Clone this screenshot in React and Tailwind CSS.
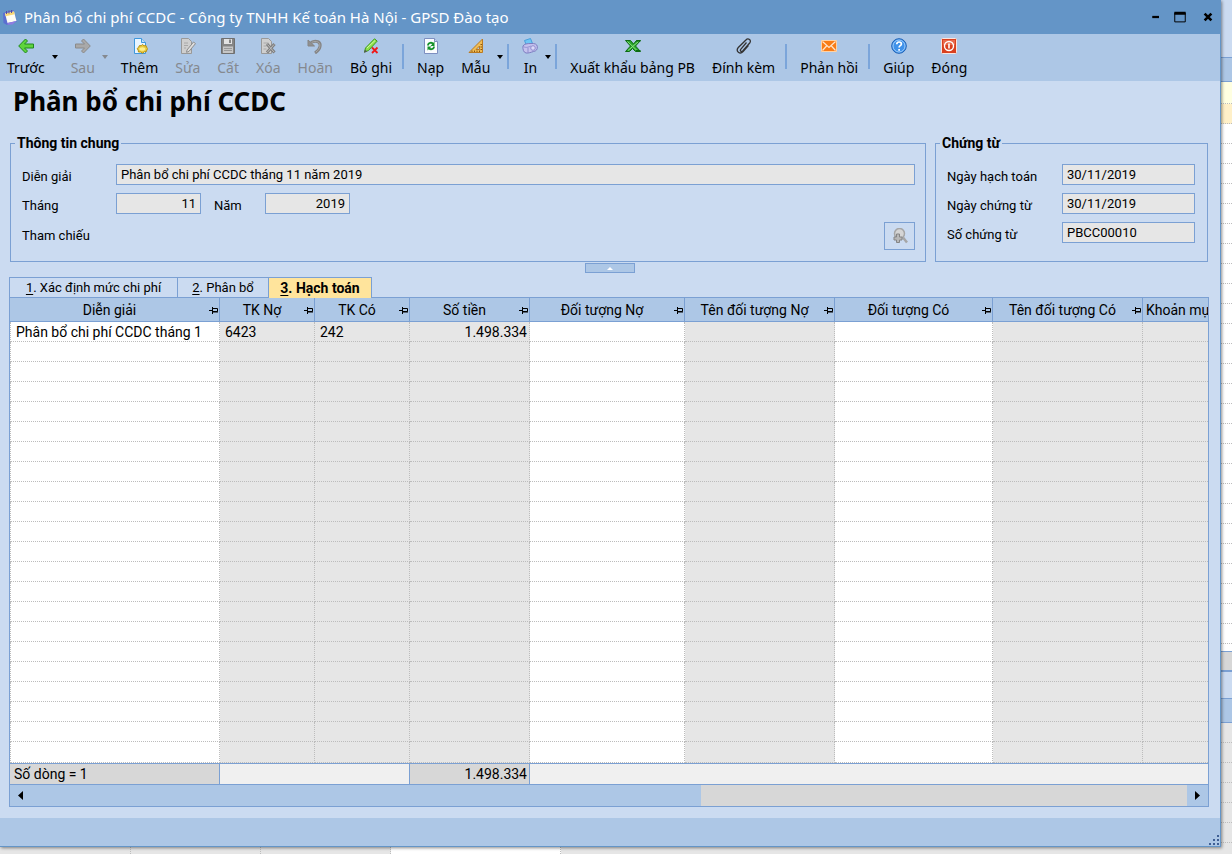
import { useState } from 'react'

const COLUMNS = [
  { title: 'Diễn giải', width: 'w-[210px]', locked: false },
  { title: 'TK Nợ', width: 'w-[95px]', locked: true },
  { title: 'TK Có', width: 'w-[95px]', locked: true },
  { title: 'Số tiền', width: 'w-[120px]', locked: true, right: true },
  { title: 'Đối tượng Nợ', width: 'w-[155px]', locked: false },
  { title: 'Tên đối tượng Nợ', width: 'w-[150px]', locked: true },
  { title: 'Đối tượng Có', width: 'w-[158px]', locked: false },
  { title: 'Tên đối tượng Có', width: 'w-[150px]', locked: true },
  { title: 'Khoản mụ', width: '', locked: true, last: true },
]

const ENTRY = ['Phân bổ chi phí CCDC tháng 1', '6423', '242', '1.498.334', '', '', '', '', '']
const ROWS = [ENTRY, ...Array.from({ length: 21 }, () => COLUMNS.map(() => ''))]

const TABS = [
  { key: '1', label: 'Xác định mức chi phí', width: 'w-[169px]' },
  { key: '2', label: 'Phân bổ', width: 'w-[91px]' },
  { key: '3', label: 'Hạch toán', width: 'w-[103px]' },
]

function Svg({ children, className = 'size-4' }) {
  return (
    <svg viewBox="0 0 16 16" className={className} fill="none" aria-hidden="true">
      {children}
    </svg>
  )
}

const ICONS = {
  back: (
    <path d="M7.500 1 .7 8l6.800 7 2-2L6.500 10h9V6h-9l3-3z" fill="#5fd43c" stroke="#1f8a1c" strokeLinejoin="round" />
  ),
  forward: (
    <path d="m8.500 1 6.800 7-6.800 7-2-2 3-3h-9V6h9l-3-3z" fill="#a9a9a9" stroke="#8a8a8a" strokeLinejoin="round" />
  ),
  add: (
    <>
      <path d="M2.500.5h7l4 4v11h-11z" fill="#e9f5ff" stroke="#3f97dc" />
      <path d="M9.500.500v4h4" fill="#bfe0fa" stroke="#3f97dc" />
      <path d="m10.500 6.500 1.500 1.300 2-.2.5 1.600 1.300 1.300-1 1.500-.5 1.700-2 .1-1.800 1.400-2-1.200-2 0-.3-1.800-1-1.700 1.500-1.300.7-1.600 1.800.1z" fill="#e9c93c" stroke="#b58f12" />
      <ellipse cx="10.300" cy="11" rx="3" ry="1.800" fill="#fff08a" />
    </>
  ),
  edit: (
    <>
      <path d="M1.500.5h7l3 3v12h-10z" fill="#cfcfcf" stroke="#999" />
      <path d="M4 5h4M4 7.500h4M4 10h2" stroke="#a8a8a8" />
      <path d="m7 12 6.500-8 2 1.600L9 13.400l-2.500.9z" fill="#dedede" stroke="#8c8c8c" />
    </>
  ),
  save: (
    <>
      <path d="M1.500.5h13v15h-13z" fill="#858585" stroke="#707070" />
      <path d="M4 1h8v5H4z" fill="#e2e2e2" />
      <path d="M9 1.500h2v3.500H9z" fill="#858585" />
      <path d="M3 8.500h10V15H3z" fill="#c6c6c6" />
      <path d="M4 10.500h8M4 12.500h8" stroke="#999" />
    </>
  ),
  remove: (
    <>
      <path d="M1.500.5h7l3 3v12h-10z" fill="#cfcfcf" stroke="#999" />
      <path d="M3.500 5h5M3.500 8h3M3.500 11h3" stroke="#a8a8a8" />
      <path d="m7 6 7.500 8.500M14.500 6 7 14.500" stroke="#7f7f7f" strokeWidth="3" />
      <path d="m7.500 6.500 6.500 7.500M14 6.500 7.500 14" stroke="#bdbdbd" />
    </>
  ),
  undo: (
    <>
      <path d="M4 4.500c5-3 10-.5 9 4-.4 2.500-2 4.500-5 6.500" stroke="#858585" strokeWidth="3" />
      <path d="M4.500 4.500c5-2.500 9-.3 8.300 3.800-.4 2.300-1.800 4.200-4 5.800" stroke="#a6a6a6" />
      <path d="M1 2v6h6.500z" fill="#909090" stroke="#858585" />
    </>
  ),
  unpost: (
    <>
      <path d="M2.500 10 11.500.8l2.700 2.300L5.500 12.500l-4 1.500z" fill="#8ee04a" stroke="#3f9c1d" />
      <path d="m4 10 8-7.500" stroke="#d2f7a6" />
      <path d="M1 15 2 11.500l2 2z" fill="#555" />
      <path d="m9 9.500 5.500 5.500M14.500 9.500 9 15" stroke="#f01818" strokeWidth="1.800" />
    </>
  ),
  reload: (
    <>
      <path d="M1.500.5h10l3 3v12h-13z" fill="#fafcff" stroke="#7d8fc0" />
      <path d="M11.500.5v3h3" fill="#c9d3ee" stroke="#7d8fc0" />
      <path d="M5 7.500C5 4.500 9 4 10.300 6M11 8.500c0 3-4 3.500-5.300 1.500" stroke="#15922a" strokeWidth="1.800" />
      <path d="M11.500 3.500V8H7.500zM4.500 12.500V8.500h4z" fill="#15922a" />
    </>
  ),
  ruler: (
    <>
      <path d="M14.500 1v13.500H1z" fill="#f0bd55" stroke="#bb7a20" />
      <path d="M11.500 8v3.500H8z" fill="#adc7e6" stroke="#bb7a20" />
      <path d="M4 14v-1.500M6.500 14v-1.500M9 14v-1.500M11.500 14v-1.500M14 11.500h-1.500M14 9h-1.500M14 6.500h-1.500" stroke="#8a5412" />
    </>
  ),
  print: (
    <>
      <path d="m2.500 2.500 6-2 2 5-6 2z" fill="#6fc7f5" stroke="#4a9fdc" />
      <path d="M1 8c1-2 4-2.500 8-2.500 4-.3 6 .8 6.300 3 .3 3-1 4.500-3.800 5-2.500.8-5 1.800-7.500 1.500C1.500 14.500.5 11 1 8z" fill="#c5c2ee" stroke="#7d7cc0" />
      <path d="M1.500 8.500C4 10.500 8 8.500 9 8M6 10v5" stroke="#8f8dce" />
      <circle cx="11" cy="10" r="2.300" fill="#dcdaf8" stroke="#8f8dce" />
    </>
  ),
  excel: (
    <>
      <path d="M.5 2.500h5l3 3.500 3-3.500h4L10.500 8l5 5.500h-5l-3-3-3 3h-4l5-5.500z" fill="#28a32c" stroke="#0d6b12" />
      <path d="m2.500 3.500 9.500 9M13.500 3.500 3 12.500" stroke="#8be27f" />
      <path d="M11 12.500h4.500M11 3h4.500" stroke="#0d6b12" />
    </>
  ),
  clip: (
    <path
      d="m10.500 4.500-5.800 6.800c-1.100 1.400.8 3 2 1.700l7-8c2.200-2.700-1.500-5.500-3.800-3L2.300 9.500c-3 3.700 1.600 7.400 4.800 4l5.500-6.300"
      stroke="#333"
      strokeWidth="1.300"
    />
  ),
  mail: (
    <>
      <path d="M.5 2.500h15v11H.5z" fill="#f97c16" stroke="#ffd2a4" />
      <path d="m1.500 3.500 6.500 6 6.500-6M1.500 12.500l4.500-5M14.500 12.500 10 7.500" stroke="#ffe6cb" strokeWidth="1.200" />
    </>
  ),
  help: (
    <>
      <circle cx="8" cy="8" r="7.300" fill="#3f92ea" stroke="#1c60b5" />
      <circle cx="8" cy="8" r="6" stroke="#9fcdfb" />
      <path d="M5.800 6.200c0-3 4.600-2.800 4.600-.2 0 1.700-2.300 1.600-2.300 3.500M8.100 11v1.800" stroke="#fff" strokeWidth="1.700" />
    </>
  ),
  power: (
    <>
      <rect x=".5" y=".5" width="15" height="15" rx="1" fill="#d9401f" stroke="#fbe3dc" />
      <path d="M2 2h12v5H2z" fill="#e9694b" />
      <circle cx="8" cy="8" r="4.500" stroke="#fff" strokeWidth="1.400" />
      <path d="M8 5.500v5" stroke="#fff" strokeWidth="1.600" />
    </>
  ),
}

const TOOLBAR = [
  [
    { label: 'Trước', icon: 'back', menu: true },
    { label: 'Sau', icon: 'forward', menu: true, disabled: true },
    { label: 'Thêm', icon: 'add' },
    { label: 'Sửa', icon: 'edit', disabled: true },
    { label: 'Cất', icon: 'save', disabled: true },
    { label: 'Xóa', icon: 'remove', disabled: true },
    { label: 'Hoãn', icon: 'undo', disabled: true },
    { label: 'Bỏ ghi', icon: 'unpost' },
  ],
  [
    { label: 'Nạp', icon: 'reload' },
    { label: 'Mẫu', icon: 'ruler', menu: true },
  ],
  [{ label: 'In', icon: 'print', menu: true }],
  [
    { label: 'Xuất khẩu bảng PB', icon: 'excel' },
    { label: 'Đính kèm', icon: 'clip' },
  ],
  [{ label: 'Phản hồi', icon: 'mail' }],
  [
    { label: 'Giúp', icon: 'help' },
    { label: 'Đóng', icon: 'power' },
  ],
]

function TitleBar() {
  return (
    <header className="flex h-[34px] items-center bg-[#6495c7] pr-[6px] pl-[2px] text-white">
      <Svg>
        <path d="m1 4 10.500-3 3.500 11.500L5 16l-3.500-2z" fill="#5b6fd0" />
        <path d="m3 4.500 9-2 2.500 9.500L5.500 14z" fill="#fdfdf4" />
        <path d="m3 4.500 9-2 .7 2.700-9 2z" fill="#f7d774" />
        <path d="M4.500 5V2M7 4.500v-3M9.500 4V1" stroke="#5a4a9c" />
        <path d="m5.500 14 9-2-4 3.500-5 .2z" fill="#8f7be0" />
      </Svg>
      <span className="ml-[6px] font-[Noto_Sans,sans-serif] text-[15px] leading-5">
        Phân bổ chi phí CCDC - Công ty TNHH Kế toán Hà Nội - GPSD Đào tạo
      </span>
      <div className="ml-auto flex items-center gap-3 text-black">
        <button aria-label="Thu nhỏ">
          <Svg className="size-3">
            <path d="M3 8h9" stroke="currentColor" strokeWidth="3" />
          </Svg>
        </button>
        <button aria-label="Phóng to">
          <Svg className="size-3">
            <path d="M1 2.500h14v12H1z" stroke="currentColor" strokeWidth="1.300" />
            <path d="M.5 3h15" stroke="currentColor" strokeWidth="4" />
          </Svg>
        </button>
        <button aria-label="Đóng cửa sổ" className="ml-1">
          <Svg className="size-3">
            <path d="m3.500 3.500 9 9M12.500 3.500l-9 9" stroke="currentColor" strokeWidth="3.500" />
          </Svg>
        </button>
      </div>
    </header>
  )
}

function ToolButton({ item }) {
  return (
    <button
      disabled={item.disabled}
      className={`flex pt-1 ${item.menu ? 'last:-mr-[2px]' : ''} ${item.disabled ? 'text-[#85898f]' : 'text-black'}`}
    >
      <span className={`flex flex-col items-center gap-1 pl-[7px] ${item.menu ? 'pr-[7px]' : 'pr-2'}`}>
        <Svg>{ICONS[item.icon]}</Svg>
        <span className="leading-5">{item.label}</span>
      </span>
      {item.menu && (
        <svg viewBox="0 0 6 4" className="mt-[17px] mr-1 h-1 w-[6px]" fill="currentColor" aria-hidden="true">
          <path d="M0 0h6L3 4z" />
        </svg>
      )}
    </button>
  )
}

function Toolbar() {
  return (
    <nav className="flex h-[47px] gap-[2px] bg-[#adc7e6] font-[Noto_Sans,sans-serif] text-sm whitespace-nowrap">
      {TOOLBAR.map((group, i) => (
        <div key={i} className="flex gap-[2px]">
          {i > 0 && <span className="mt-[10px] mr-1 h-[25px] w-[2px] bg-[#7ba5da]" />}
          {group.map(item => (
            <ToolButton key={item.label} item={item} />
          ))}
        </div>
      ))}
    </nav>
  )
}

function Field({ id, value, className = '' }) {
  return (
    <input
      id={id}
      readOnly
      defaultValue={value}
      className={`h-[21px] min-w-0 border border-[#7ba0d3] bg-[#e6e6e6] px-1 outline-none ${className}`}
    />
  )
}

function Label({ htmlFor, className = '', children }) {
  return (
    <label htmlFor={htmlFor} className={`pt-[5px] leading-4 ${className}`}>
      {children}
    </label>
  )
}

function Group({ title, className, children }) {
  return (
    <fieldset className={`h-[128px] min-w-0 border border-[#7ba0d3] ${className}`}>
      <legend className="ml-1 px-[2px] text-sm leading-[18px] font-bold">{title}</legend>
      {children}
    </fieldset>
  )
}

function GeneralInfo() {
  return (
    <Group title="Thông tin chung" className="flex-1">
      <div className="grid grid-cols-[94px_1fr] items-center gap-y-2 pt-3 pr-[10px] pl-[11px]">
        <Label htmlFor="desc">Diễn giải</Label>
        <Field id="desc" value="Phân bổ chi phí CCDC tháng 11 năm 2019" />
        <Label htmlFor="month">Tháng</Label>
        <div className="flex items-center">
          <Field id="month" value="11" className="w-[85px] text-right" />
          <Label htmlFor="year" className="w-[64px] pl-[13px]">
            Năm
          </Label>
          <Field id="year" value="2019" className="w-[85px] text-right" />
        </div>
        <span>Tham chiếu</span>
        <button
          aria-label="Tìm tham chiếu"
          className="flex h-7 w-[31px] items-center justify-center justify-self-end border border-[#7ba0d3]"
        >
          <Svg className="size-4">
            <circle cx="7.500" cy="5.500" r="5" fill="#d5d5d5" stroke="#a6a6a6" strokeWidth="1.500" />
            <path d="m11 9.500 4 5" stroke="#a6a6a6" strokeWidth="2.500" />
            <path d="M4.500 6h3v3H10v3H7.500v2.500h-3V12H2V9h2.500z" fill="#b8b8b8" stroke="#858585" />
          </Svg>
        </button>
      </div>
    </Group>
  )
}

function Voucher() {
  const fields = [
    ['posted', 'Ngày hạch toán', '30/11/2019'],
    ['dated', 'Ngày chứng từ', '30/11/2019'],
    ['number', 'Số chứng từ', 'PBCC00010'],
  ]
  return (
    <Group title="Chứng từ" className="w-[273px]">
      <div className="grid grid-cols-[115px_1fr] items-center gap-y-2 pt-3 pr-3 pl-[11px]">
        {fields.map(([id, label, value]) => (
          <div key={id} className="contents">
            <Label htmlFor={id}>{label}</Label>
            <Field id={id} value={value} />
          </div>
        ))}
      </div>
    </Group>
  )
}

function Tabs({ active, onChange }) {
  return (
    <div role="tablist" className="flex">
      {TABS.map((t, i) => {
        const on = t.key === active
        return (
          <button
            key={t.key}
            role="tab"
            aria-selected={on}
            onClick={() => onChange(t.key)}
            className={`border-t border-r border-[#7ba0d3] whitespace-nowrap ${t.width} ${i === 0 ? 'border-l' : ''} ${
              on ? 'relative z-10 -mb-px h-[21px] bg-[#ffe49c] text-sm leading-5 font-bold' : 'h-5'
            }`}
          >
            <u className="underline-offset-2">{t.key}</u>. {t.label}
          </button>
        )
      })}
    </div>
  )
}

function Pin() {
  return (
    <svg viewBox="0 0 10 8" className="h-2 w-[10px] shrink-0" fill="none" stroke="#000" aria-hidden="true">
      <path d="M0 3.500h3M3.500 0v7M4 1.500h4.500v3H4" />
      <path d="M4 5h5" />
    </svg>
  )
}

function LedgerTable() {
  return (
    <table className="w-full table-fixed border-separate border-spacing-0 text-sm leading-[17px]">
      <colgroup>
        {COLUMNS.map(c => (
          <col key={c.title} className={c.width} />
        ))}
      </colgroup>
      <thead>
        <tr className="h-6 bg-[#adc7e6]">
          {COLUMNS.map(c => (
            <th
              key={c.title}
              className={`overflow-hidden border-b border-[#7ba0d3] p-0 pt-[2px] font-normal whitespace-nowrap ${c.last ? '' : 'border-r'}`}
            >
              {c.last ? (
                <div className="pl-[3px] text-left">{c.title}</div>
              ) : (
                <div className="flex items-center">
                  <span className="flex-1 text-center">{c.title}</span>
                  <Pin />
                </div>
              )}
            </th>
          ))}
        </tr>
      </thead>
      <tbody>
        {ROWS.map((row, i) => (
          <tr key={i} className="h-5 last:h-[21px]">
            {COLUMNS.map((c, j) => (
              <td
                key={c.title}
                className={`overflow-hidden border-b border-dotted border-[#bcbcbc] pt-[2px] pb-0 whitespace-nowrap ${
                  c.locked ? 'bg-[#e6e6e6]' : 'bg-white'
                } ${c.last ? '' : 'border-r'} ${j === 0 ? 'border-l' : ''} ${c.right ? 'pr-[2px] text-right' : 'pl-[5px]'}`}
              >
                {row[j]}
              </td>
            ))}
          </tr>
        ))}
      </tbody>
      <tfoot>
        <tr className="h-[22px] bg-[#f0f0f0]">
          <td className="border-y border-r border-[#7ba0d3] bg-[#d7d7d7] pt-px pb-0 pl-1">Số dòng = 1</td>
          <td colSpan={2} className="border-y border-r border-[#7ba0d3]" />
          <td className="border-y border-r border-[#7ba0d3] bg-[#d7d7d7] pt-px pr-[2px] pb-0 text-right">1.498.334</td>
          <td colSpan={5} className="border-y border-[#7ba0d3]" />
        </tr>
      </tfoot>
    </table>
  )
}

function ScrollBar() {
  return (
    <div className="flex h-[21px] bg-[#d7d7d7]">
      <button aria-label="Cuộn trái" className="flex w-[21px] items-center justify-center bg-[#adc7e6]">
        <svg viewBox="0 0 5 9" className="h-[9px] w-[5px]" aria-hidden="true">
          <path d="M5 0v9L0 4.500z" />
        </svg>
      </button>
      <div className="flex-1">
        <div className="h-full w-[58%] bg-[#adc7e6]" />
      </div>
      <button aria-label="Cuộn phải" className="flex w-[21px] items-center justify-center bg-[#adc7e6]">
        <svg viewBox="0 0 5 9" className="h-[9px] w-[5px]" aria-hidden="true">
          <path d="M0 0v9l5-4.500z" />
        </svg>
      </button>
    </div>
  )
}

function StatusBar() {
  return (
    <footer className="flex h-7 items-end justify-end bg-[#adc7e6] p-px">
      <svg viewBox="0 0 10 10" className="size-[10px]" fill="#3f5f94" aria-hidden="true">
        <path d="M8 0h2v2H8zM4 4h2v2H4zM8 4h2v2H8zM0 8h2v2H0zM4 8h2v2H4zM8 8h2v2H8z" />
      </svg>
    </footer>
  )
}

// Slice of the list window that sits behind this one, right side
function BackdropRight() {
  return (
    <div className="h-[854px] w-[11px] overflow-hidden" aria-hidden="true">
      <div className="h-[57px] bg-[#cbdbf1]" />
      <div className="h-[25px] border-y border-[#7ba0d3] bg-[#adc7e6]" />
      <div className="h-[22px] border-b border-dotted border-[#bcbcbc] bg-[#ffffe1]" />
      <div className="h-5 border-b border-dotted border-[#bcbcbc] bg-[#fff0c8]" />
      {Array.from({ length: 26 }, (_, i) => (
        <div key={i} className="h-5 border-b border-dotted border-[#bcbcbc] bg-white" />
      ))}
      <div className="h-[7px] bg-white" />
      <div className="h-[21px] border-t border-b-2 border-[#7ba0d3] bg-[#d7d7d7]" />
      <div className="h-[26px] bg-[#cbdbf1]" />
      <div className="h-[25px] border-y border-[#7ba0d3] bg-[#adc7e6]" />
      {Array.from({ length: 7 }, (_, i) => (
        <div key={i} className="h-5 border-b border-dotted border-[#bcbcbc] bg-[#e6e6e6]" />
      ))}
    </div>
  )
}

function BackdropBottom() {
  return (
    <div className="flex h-[7px] bg-[#e6e6e6]" aria-hidden="true">
      <div className="w-[131px] border-r border-dotted border-[#bcbcbc]" />
      <div className="w-[130px] border-r border-dotted border-[#bcbcbc]" />
      <div className="w-[130px] border-r border-dotted border-[#bcbcbc]" />
      <div className="w-[170px] border-r border-dotted border-[#bcbcbc] bg-white" />
    </div>
  )
}

export default function App() {
  const [tab, setTab] = useState('3')

  return (
    <div className="flex min-h-screen bg-[#e6e6e6] font-[Roboto,sans-serif] text-[13px] text-black">
      <div className="flex min-w-0 flex-1 flex-col">
        <main className="relative z-10 flex flex-1 flex-col border-r border-b border-[#6495c7] bg-[#cbdbf1] shadow-[1px_1px_3px_rgba(0,0,0,0.45)]">
          <TitleBar />
          <Toolbar />
          <h1 className="mt-[2px] ml-[13px] font-[Noto_Sans,sans-serif] text-[26px] leading-9 font-bold">
            Phân bổ chi phí CCDC
          </h1>
          <div className="mt-[15px] mr-3 ml-[10px] flex gap-[9px]">
            <GeneralInfo />
            <Voucher />
          </div>
          <button
            aria-label="Thu gọn"
            className="mt-px flex h-[10px] w-[50px] items-center justify-center self-center border border-[#7ba0d3] bg-[#adc7e6]"
          >
            <svg viewBox="0 0 6 3" className="h-[3px] w-[6px]" fill="#fff" aria-hidden="true">
              <path d="M0 3h6L3 0z" />
            </svg>
          </button>
          <section className="mt-1 mr-[11px] mb-[11px] ml-[9px] flex flex-col">
            <Tabs active={tab} onChange={setTab} />
            <div className="overflow-hidden border border-[#7ba0d3] bg-white">
              <LedgerTable />
              <ScrollBar />
            </div>
          </section>
          <div className="mt-auto">
            <StatusBar />
          </div>
        </main>
        <BackdropBottom />
      </div>
      <BackdropRight />
    </div>
  )
}
